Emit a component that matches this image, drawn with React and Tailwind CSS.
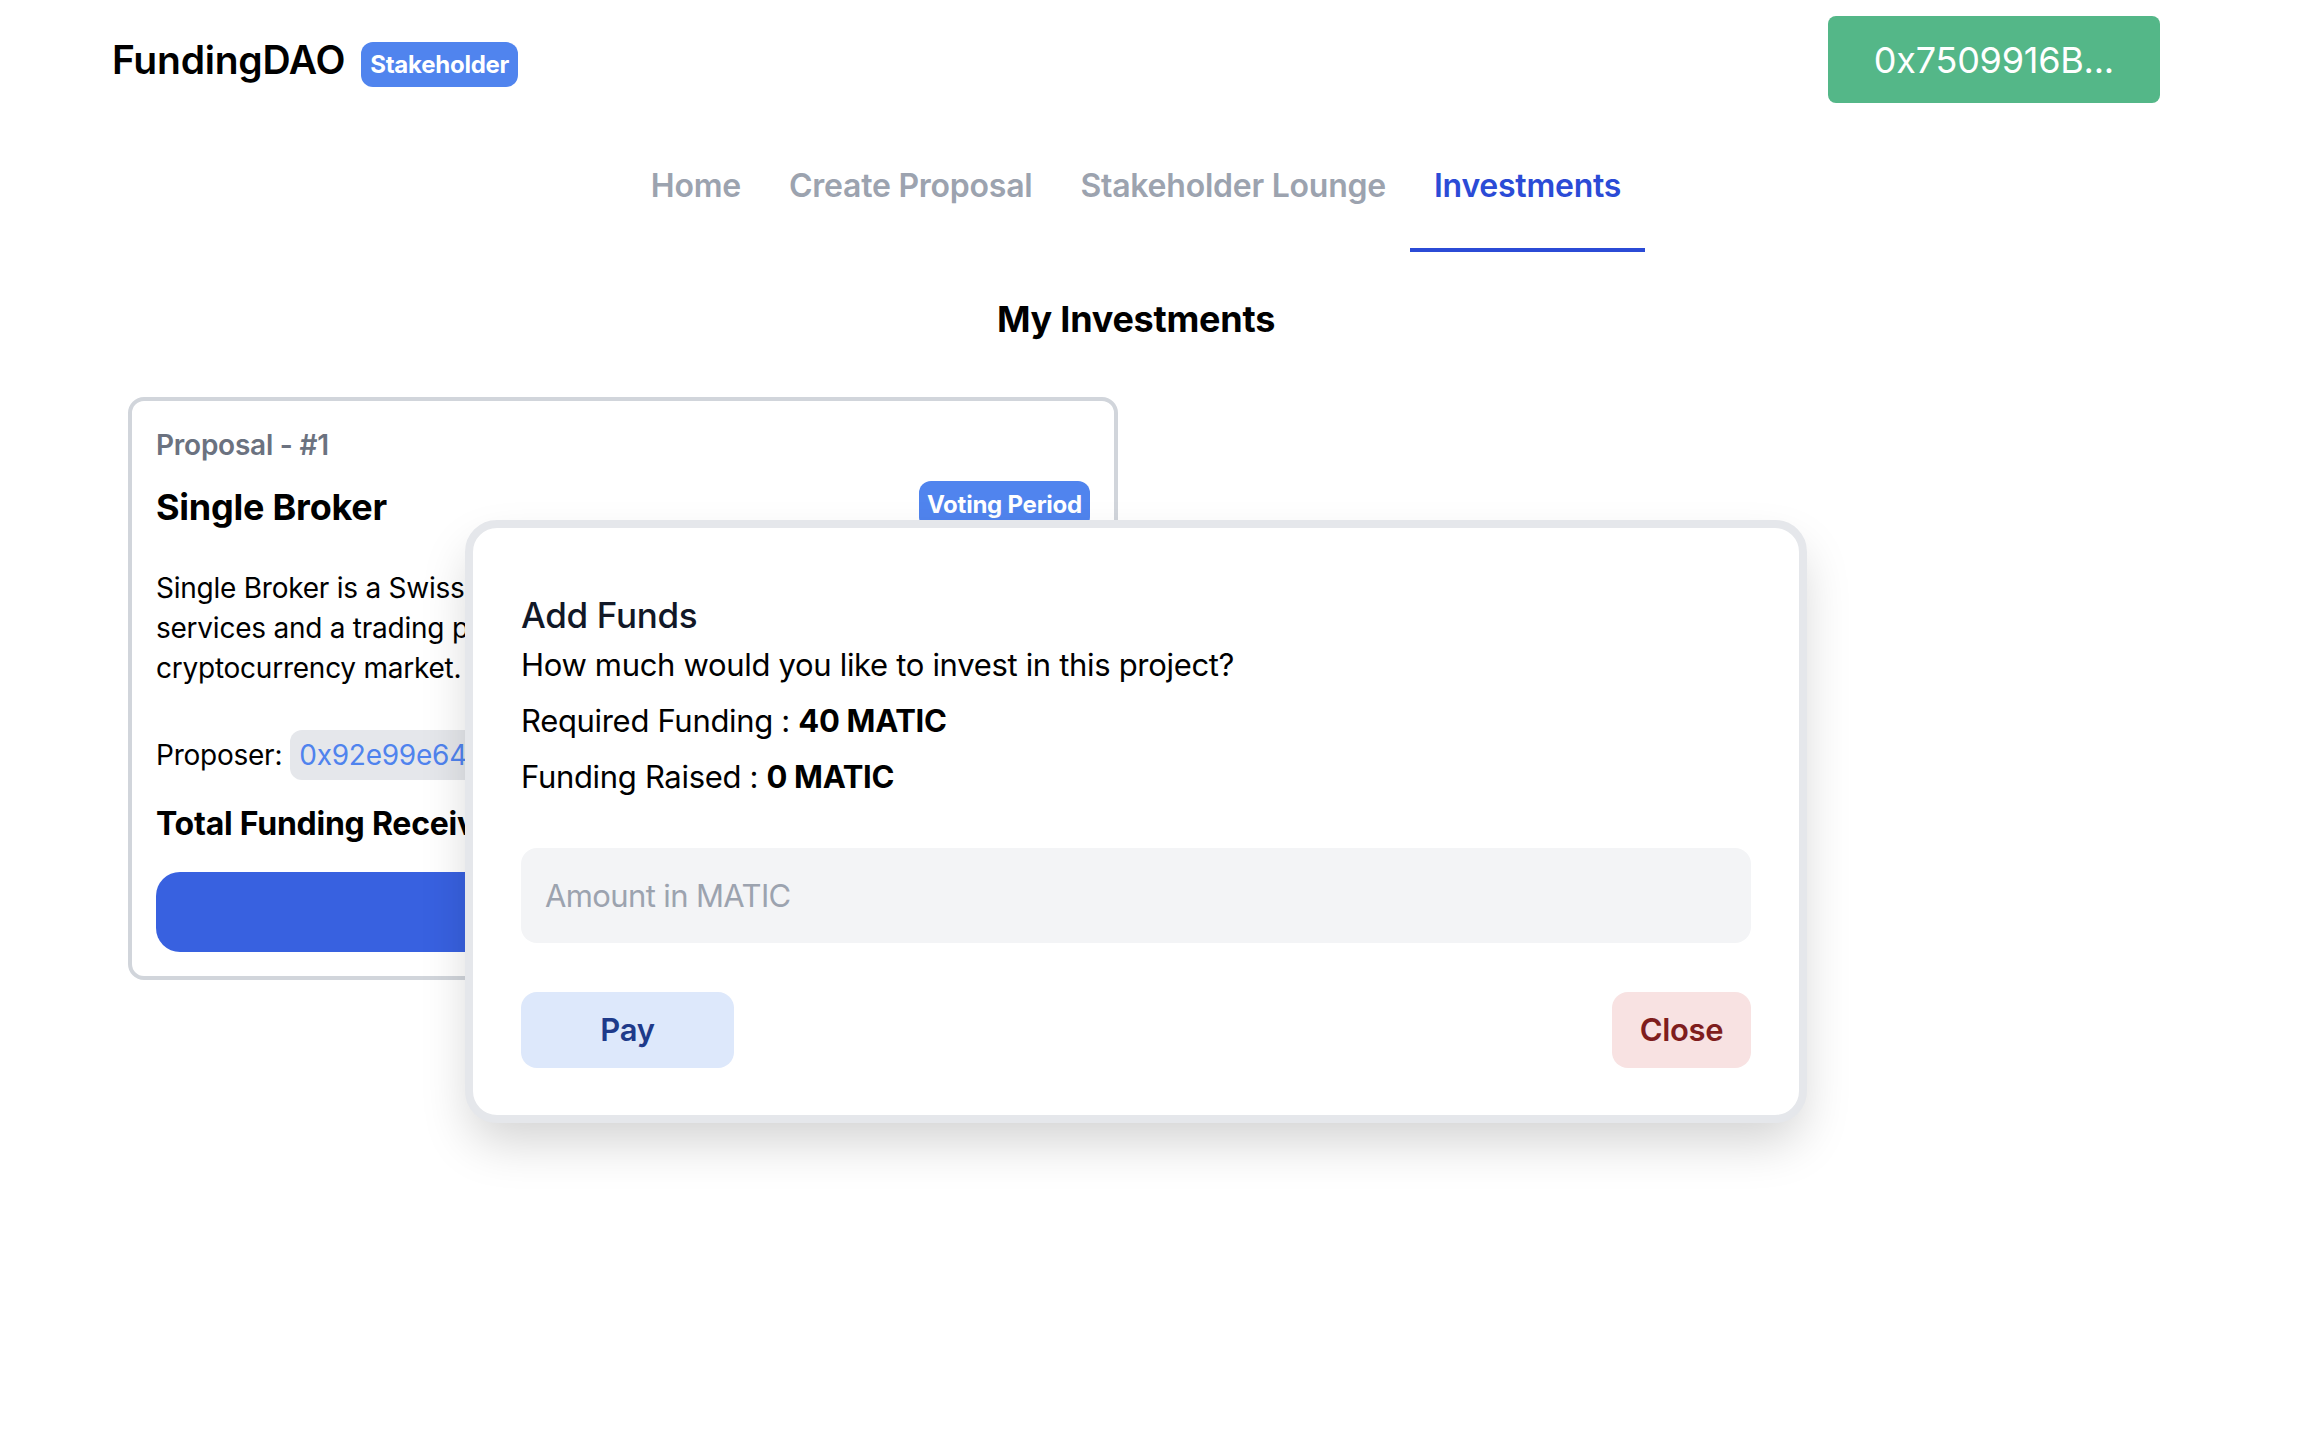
import React, { useState } from 'react'

const tabs = ['Home', 'Create Proposal', 'Stakeholder Lounge', 'Investments']

const ProposalCard = () => {
  return (
    <div className="rounded-2xl border-4 border-[#d1d5db] bg-white p-6">
      <p className="text-[28px] leading-[40px] font-semibold text-[#6b7280]">Proposal - #1</p>
      <div className="mt-[14px] flex items-center justify-between">
        <h3 className="text-[36px] leading-[56px] font-bold text-black">Single Broker</h3>
        <span className="-mt-[4px] rounded-xl bg-[#5084ee] px-2 py-2 text-[24px] leading-[32px] font-bold text-white">
          Voting Period
        </span>
      </div>
      <p className="mt-[33px] text-[28px] leading-[40px] text-black">
        Single Broker is a Swiss-based brokerage company offering
        <br />
        services and a trading platform for investing in the
        <br />
        cryptocurrency market.
      </p>
      <div className="mt-[42px] flex items-center gap-[8px] text-[28px] leading-[40px] text-black">
        <span>Proposer:</span>
        <span className="rounded-xl bg-[#e5e7eb] px-[9px] py-[5px] text-[#4f83ee]">0x92e99e64...B3a1</span>
      </div>
      <p className="mt-5 text-[32px] leading-[48px] font-bold text-black">Total Funding Received: 0 MATIC</p>
      <button className="mt-6 h-[80px] w-full rounded-3xl bg-[#3861e0] text-[32px] font-semibold text-white">
        Add Funds
      </button>
    </div>
  )
}

const FundsModal = ({ onClose }) => {
  const [amount, setAmount] = useState('')
  return (
    <div className="absolute left-1/2 top-[520px] w-[1342px] -translate-x-1/2 rounded-[32px] border-8 border-[#e5e7eb] bg-white px-12 pt-[63px] pb-[47px] tracking-[-0.02em] shadow-[0_24px_50px_-6px_rgba(0,0,0,0.18)]">
      <h3 className="text-[35px] leading-[48px] font-medium text-[#111827]">Add Funds</h3>
      <p className="mt-[2px] text-[31px] leading-[48px] text-black">How much would you like to invest in this project?</p>
      <p className="mt-2 text-[31px] leading-[48px] text-black">
        Required Funding : <span className="font-bold">40 MATIC</span>
      </p>
      <p className="mt-2 text-[31px] leading-[48px] text-black">
        Funding Raised : <span className="font-bold">0 MATIC</span>
      </p>
      <input
        autoFocus
        value={amount}
        onChange={e => setAmount(e.target.value)}
        placeholder="Amount in MATIC"
        className="mt-[47px] h-[95px] w-full rounded-2xl bg-[#f3f4f6] px-6 text-[31px] tracking-[-0.02em] text-black caret-black outline-none placeholder:text-[#9ca3af]"
      />
      <div className="mt-[49px] flex items-center justify-between">
        <button className="h-[76px] w-[213px] rounded-2xl bg-[#dde8fb] text-[31px] font-semibold text-[#1e3a8a]">Pay</button>
        <button onClick={onClose} className="h-[76px] w-[139px] rounded-2xl bg-[#f8e2e2] text-[31px] font-semibold text-[#7f1d1d]">
          Close
        </button>
      </div>
    </div>
  )
}

export default function App() {
  const [active, setActive] = useState('Investments')
  const [showModal, setShowModal] = useState(true)

  return (
    <div className="relative min-h-screen w-[2272px] bg-white font-['Inter','Noto_Sans',sans-serif] tracking-[-0.015em] antialiased">
      <header className="mx-auto flex max-w-[2048px] items-center justify-between py-4">
        <div className="flex items-center gap-[16px]">
          <h1 className="text-[39px] leading-[56px] font-semibold text-black">FundingDAO</h1>
          <span className="mt-[10px] rounded-xl bg-[#5084ee] px-[9px] py-[6px] text-[24px] leading-[33px] font-bold text-white">
            Stakeholder
          </span>
        </div>
        <button className="h-[87px] rounded-lg bg-[#54b788] px-[46px] text-[36px] text-white">0x7509916B...</button>
      </header>

      <nav className="mt-[27px] flex justify-center">
        {tabs.map(t => (
          <button
            key={t}
            onClick={() => setActive(t)}
            className={
              t === active
                ? 'border-b-4 border-[#2b4bd6] px-6 pt-4 pb-[38px] text-[32px] leading-[48px] font-semibold text-[#2b4bd6]'
                : 'border-b-4 border-transparent px-6 pt-4 pb-[38px] text-[32px] leading-[48px] font-semibold text-[#9ca3af]'
            }
          >
            {t}
          </button>
        ))}
      </nav>

      <h2 className="mt-[39px] text-center text-[36px] leading-[56px] font-bold text-black">My Investments</h2>

      <div className="mx-auto mt-[50px] grid max-w-[2048px] grid-cols-2 gap-[36px] px-4">
        <ProposalCard />
      </div>

      {showModal && <FundsModal onClose={() => setShowModal(false)} />}
    </div>
  )
}
